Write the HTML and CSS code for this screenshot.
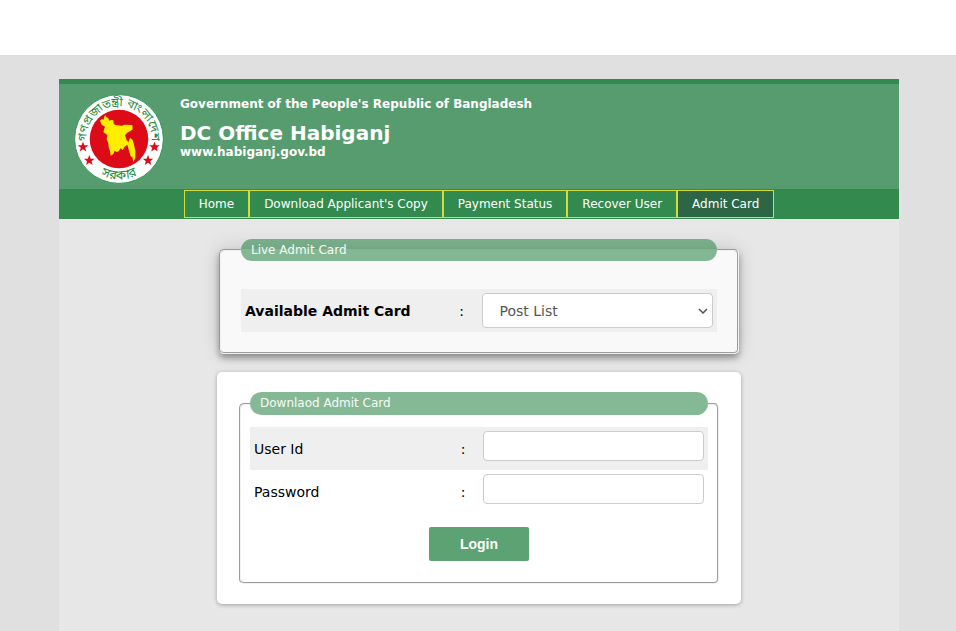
FILE: index.html
```html
<!DOCTYPE html>
<html lang="en">
<head>
    <meta charset="UTF-8">
    <title>DC Office Habiganj</title>
    <link rel="stylesheet" href="styles.css">
</head>
<body>
<div class="topbar"></div>
<div class="page">
    <div class="container">
        <header class="header">
            <!-- emblem -->
            <svg class="logo" viewBox="0 0 90 90" role="img" aria-label="Government seal">
                <defs>
                    <path id="arcTop" d="M13.1 51 A32.5 32.5 0 1 1 76.9 51"/>
                    <path id="arcBottom" d="M17 74 A40 40 0 0 0 73 74"/>
                </defs>
                <circle cx="45" cy="45" r="44.4" fill="#fff" stroke="#2f9a55" stroke-width="1"/>
                <circle cx="45" cy="45" r="29.3" fill="#dd0a18"/>
                <path fill="#ffee00" transform="scale(0.3333)" d="M93 63 L98 70 L103 73 L106 80 L114 77 L119 80 L118 88 L124 93 L143 95 L152 92 L175 93 L176 106 L168 112 L160 116 L153 124 L158 138 L163 145 L168 131 L176 138 L180 152 L184 170 L184 192 L178 204 L175 190 L170 187 L165 170 L160 152 L150 160 L147 168 L140 163 L134 172 L128 174 L122 170 L118 180 L110 185 L108 172 L104 160 L103 148 L98 136 L100 123 L88 114 L93 98 L83 92 L78 80 L84 74 L88 78 Z"/>
                <g fill="#dd0a18">
                    <path id="star" d="M9 47.5 L10.4 51.3 L14.3 51.3 L11.2 53.7 L12.3 57.6 L9 55.3 L5.7 57.6 L6.8 53.7 L3.7 51.3 L7.6 51.3 Z"/>
                    <use href="#star" x="6.3" y="13.5"/>
                    <use href="#star" x="71.5" y="0"/>
                    <use href="#star" x="65" y="13.5"/>
                </g>
                <text class="seal"><textPath href="#arcTop" startOffset="50%" text-anchor="middle">গণপ্রজাতন্ত্রী বাংলাদেশ</textPath></text>
                <text class="seal big"><textPath href="#arcBottom" startOffset="50%" text-anchor="middle">সরকার</textPath></text>
            </svg>
            <div class="title">
                <p>Government of the People's Republic of Bangladesh</p>
                <h1>DC Office Habiganj</h1>
                <p>www.habiganj.gov.bd</p>
            </div>
        </header>
        <nav class="menu">
            <a href="#">Home</a>
            <a href="#">Download Applicant's Copy</a>
            <a href="#">Payment Status</a>
            <a href="#">Recover User</a>
            <a href="#" class="active">Admit Card</a>
        </nav>
        <main class="content">
            <!-- live admit card -->
            <form action="#" method="get">
                <fieldset class="live">
                    <legend>Live Admit Card</legend>
                    <div class="row shade">
                        <label for="post"><b>Available Admit Card</b></label>
                        <span>:</span>
                        <select id="post" name="post">
                            <option>Post List</option>
                        </select>
                    </div>
                </fieldset>
            </form>
            <!-- login -->
            <form class="card" action="#" method="post">
                <fieldset class="login">
                    <legend>Downlaod Admit Card</legend>
                    <div class="row shade">
                        <label for="user">User Id</label>
                        <span>:</span>
                        <input id="user" name="user" type="text">
                    </div>
                    <div class="row">
                        <label for="password">Password</label>
                        <span>:</span>
                        <input id="password" name="password" type="password">
                    </div>
                    <button type="submit">Login</button>
                </fieldset>
            </form>
        </main>
    </div>
</div>
</body>
</html>
```
FILE: styles.css
```css
*{
    padding: 0px;
    margin: 0px;
    box-sizing: border-box;
}
body{
    display: flex;
    flex-direction: column;
    min-height: 100vh;
    background: #e0e0e0;
    font-family: Verdana, "DejaVu Sans", sans-serif;
    font-size: 14px;
    color: #000;
}
.topbar{
    height: 56px;
    background: #fff;
    border-bottom: 1px solid #d6dfe6;
}
.page{
    flex: 1;
    display: flex;
    justify-content: center;
    padding: 23px 0 0 2px;
}
.container{
    width: 100%;
    max-width: 840px;
    background: #e7e7e7;
}
.header{
    display: flex;
    gap: 16px;
    min-height: 110px;
    padding: 10px 15px 0;
    border-top: 5px solid #338a4e;
    background: #579c6e;
    color: #fff;
}
.logo{
    width: 90px;
    height: 90px;
}
.seal{
    font-family: "Noto Sans Bengali", "Noto Sans", sans-serif;
    font-size: 12px;
    fill: #1f8a45;
}
.big{
    font-size: 13px;
}
.title{
    font-size: 12px;
    font-weight: bold;
    line-height: 15px;
    padding-top: 3px;
}
.title h1{
    font-size: 20px;
    line-height: 24px;
    margin-top: 9px;
}
.menu{
    display: flex;
    flex-wrap: wrap;
    justify-content: center;
    padding: 1px 0;
    background: #338a4e;
}
.menu a{
    padding: 0 14px;
    border: 1px solid #d4dc3c;
    color: #fff;
    font-size: 12px;
    line-height: 26px;
    text-decoration: none;
}
.menu .active{
    background: #2c6644;
}
.content{
    max-width: 524px;
    margin: 0 auto;
    padding: 20px 0 27px;
}
fieldset{
    min-width: 0;
    border: 2px groove #f0f0f0;
    border-radius: 5px;
}
legend{
    width: 100%;
    padding: 0 10px;
    border-radius: 12px;
    background: rgba(51, 138, 78, 0.6);
    color: #f5fbf6;
    font-size: 12px;
    line-height: 22px;
}
.live{
    margin: 0 2px;
    padding: 28px 20px 20px;
    background: #f9f9f9;
    box-shadow: 0 4px 6px rgba(0, 0, 0, 0.35), 0 0 20px rgba(0, 0, 0, 0.15);
}
.row{
    display: grid;
    grid-template-columns: 42% 40px 1fr;
    align-items: center;
    min-height: 43px;
    padding: 4px;
}
.shade{
    background: #efefef;
}
.row span{
    text-align: center;
}
select, input{
    width: 100%;
    border: 1px solid #ccc;
    border-radius: 4px;
    background: #fff;
    font: inherit;
}
select{
    height: 35px;
    padding-left: 17px;
    color: #555;
    appearance: none;
    background: #fff url("data:image/svg+xml,%3Csvg xmlns='http://www.w3.org/2000/svg' width='10' height='6'%3E%3Cpath d='M1 1l4 4 4-4' fill='none' stroke='%23555' stroke-width='1.5'/%3E%3C/svg%3E") no-repeat right 4px center;
}
input{
    height: 30px;
    padding: 0 8px;
    align-self: start;
}
.card{
    margin-top: 18px;
    padding: 20px 22px;
    border-radius: 5px;
    background: #fff;
    box-shadow: 0 1px 4px rgba(0, 0, 0, 0.3);
}
.login{
    padding: 12px 9px 21px;
}
.login legend{
    line-height: 23px;
}
button{
    display: block;
    width: 100px;
    height: 34px;
    margin: 14px auto 0;
    border: 0;
    border-radius: 2px;
    background: #5da273;
    color: #fff;
    font: bold 14px "Liberation Sans", Arial, sans-serif;
}
```
